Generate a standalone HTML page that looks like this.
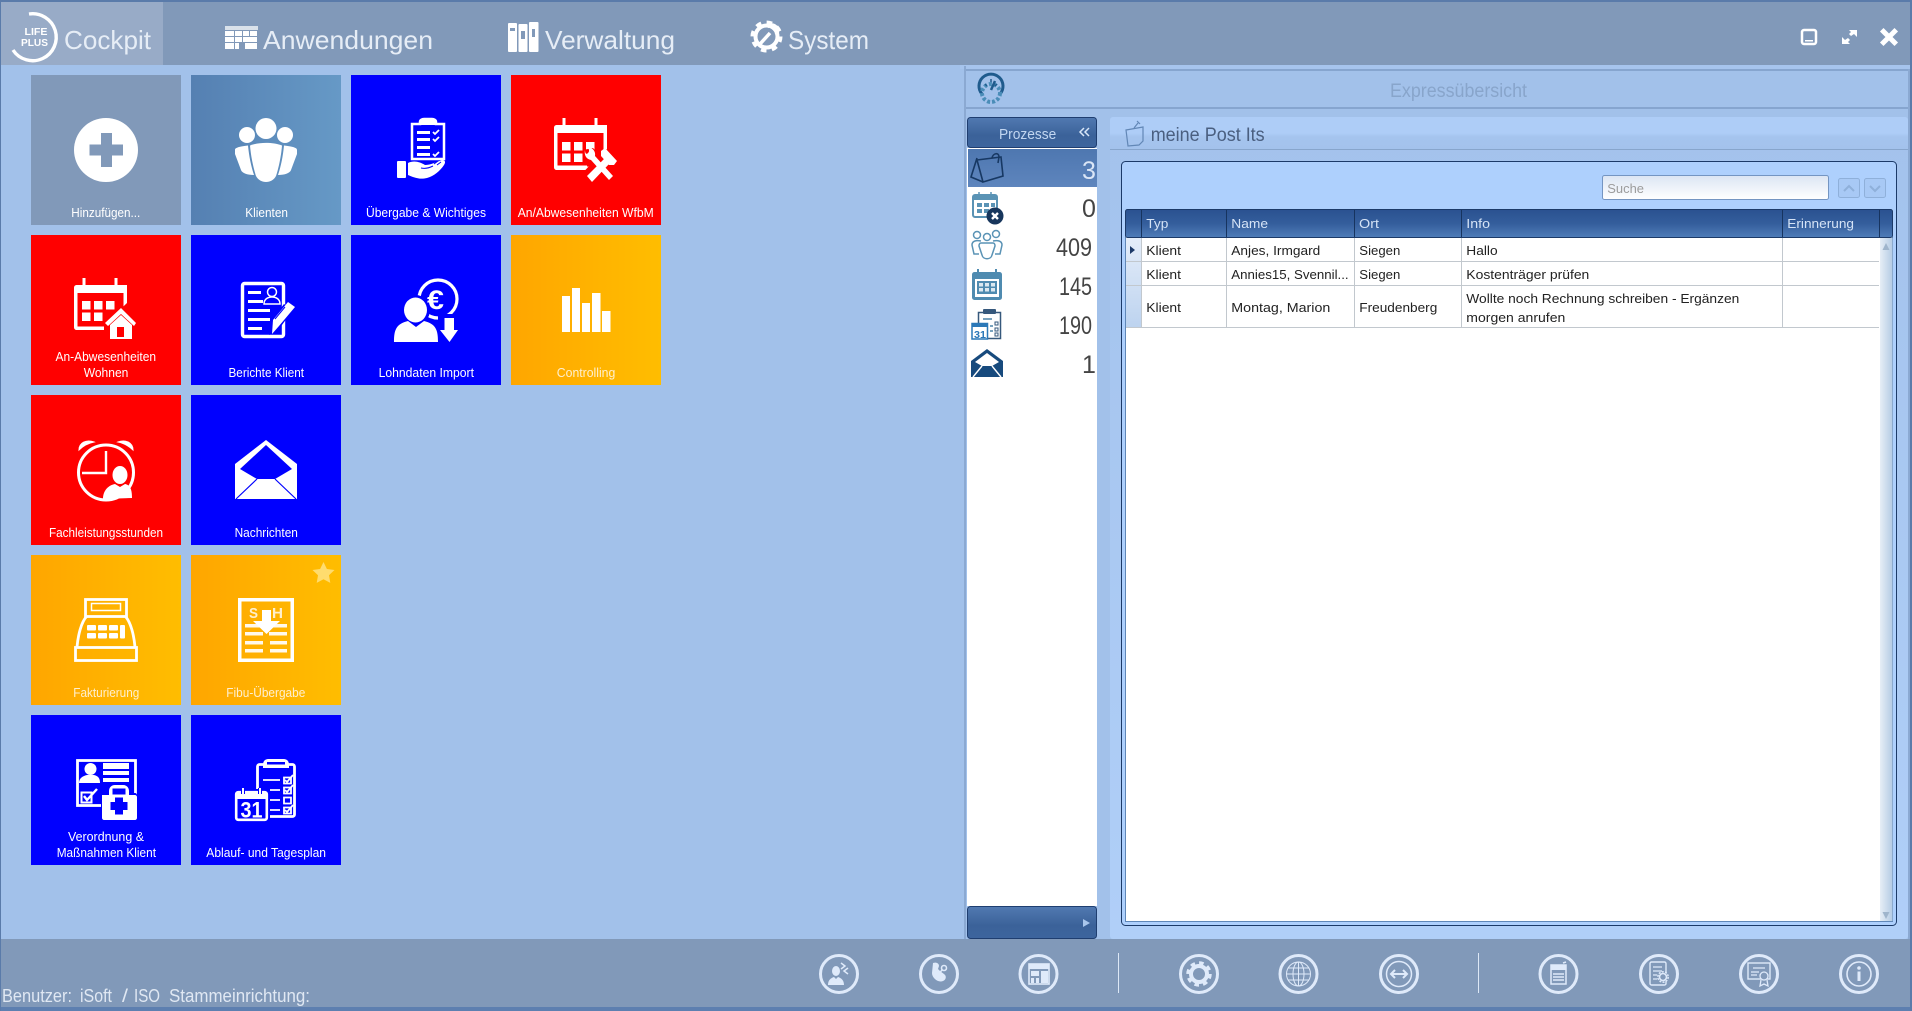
<!DOCTYPE html>
<html lang="de"><head><meta charset="utf-8"><title>Life Plus Cockpit</title>
<style>
html,body{margin:0;padding:0;width:1912px;height:1011px;overflow:hidden;background:#a2c1ea}
svg{display:block;font-family:"Liberation Sans",sans-serif}
.tl{font-size:12.5px;fill:#fff}
.tp{font-size:12.5px;fill:#ffefcf}
.g{font-size:13px;fill:#222}
.h{font-size:13px;fill:#d5e3f6}
.n{font-size:26px;fill:#e6edf6}
.c{font-size:25px;fill:#444}
.st{font-size:18px;fill:#e0e8f3}
.bi{fill:none;stroke:#dfeafa;stroke-width:1.6}
.bf{fill:#dfeafa}
</style></head><body>
<svg width="1912" height="1011" viewBox="0 0 1912 1011" xmlns="http://www.w3.org/2000/svg">
<defs>
<linearGradient id="or" x1="0" x2="1" y1="0" y2="0"><stop offset="0" stop-color="#ffa600"/><stop offset="1" stop-color="#ffbd00"/></linearGradient>
<linearGradient id="kl" x1="0" x2="1" y1="0" y2="0"><stop offset="0" stop-color="#5580b2"/><stop offset="1" stop-color="#6699c6"/></linearGradient>
<linearGradient id="ph" x1="0" x2="0" y1="0" y2="1"><stop offset="0" stop-color="#5179b1"/><stop offset=".6" stop-color="#3b6299"/><stop offset="1" stop-color="#3d659e"/></linearGradient>
<linearGradient id="sel" x1="0" x2="0" y1="0" y2="1"><stop offset="0" stop-color="#4e77b0"/><stop offset="1" stop-color="#5e85bd"/></linearGradient>
<linearGradient id="gh" x1="0" x2="0" y1="0" y2="1"><stop offset="0" stop-color="#2a5190"/><stop offset=".5" stop-color="#345e9c"/><stop offset="1" stop-color="#4f7cb8"/></linearGradient>
<linearGradient id="ps" x1="0" x2="0" y1="0" y2="1"><stop offset="0" stop-color="#a3c2ec"/><stop offset="1" stop-color="#b0cff8"/></linearGradient>
<linearGradient id="pt" x1="0" x2="0" y1="0" y2="1"><stop offset="0" stop-color="#aecdf7"/><stop offset=".5" stop-color="#aecdf7"/><stop offset=".62" stop-color="#a5c4ee"/><stop offset="1" stop-color="#a3c2ec"/></linearGradient>
<linearGradient id="sb" x1="0" x2="1" y1="0" y2="0"><stop offset="0" stop-color="#e6eef6"/><stop offset="1" stop-color="#b4cbe4"/></linearGradient>
<linearGradient id="sr" x1="0" x2="0" y1="0" y2="1"><stop offset="0" stop-color="#dbe5f3"/><stop offset="1" stop-color="#ffffff"/></linearGradient>
<linearGradient id="rs" x1="0" x2="0" y1="0" y2="1"><stop offset="0" stop-color="#e4edf9"/><stop offset="1" stop-color="#bdd3ef"/></linearGradient>
</defs>

<!-- base -->
<rect width="1912" height="1011" fill="#a2c1ea"/>
<rect width="1912" height="65" fill="#8199b9"/>
<rect width="163" height="65" fill="#98abc7"/>
<rect width="1912" height="2" fill="#5a7baa"/>
<rect y="939" width="1912" height="68" fill="#8199b9"/>
<rect y="1007" width="1912" height="4" fill="#5d7fb0"/>
<rect width="1" height="1011" fill="#5a7baa"/>
<rect x="1910" width="2" height="1011" fill="#5a7baa"/>

<!-- logo -->
<path d="M29 14A23.5 23.5 0 1 1 13 50" fill="none" stroke="#fff" stroke-width="3.400"/>
<text x="24.500" y="35" font-size="10.500" font-weight="bold" fill="#fff" textLength="23" lengthAdjust="spacingAndGlyphs">LIFE</text>
<text x="21" y="46" font-size="10.500" font-weight="bold" fill="#fff" textLength="27" lengthAdjust="spacingAndGlyphs">PLUS</text>
<text class="n" x="64" y="49" textLength="87" lengthAdjust="spacingAndGlyphs">Cockpit</text>

<!-- Anwendungen icon -->
<g fill="#fff">
<rect x="225" y="26" width="33" height="4" opacity=".7"/>
<rect x="225" y="31" width="9" height="5"/><rect x="235" y="31" width="7" height="5"/><rect x="243" y="31" width="6" height="5"/><rect x="250" y="31" width="7" height="5"/>
<rect x="225" y="37" width="9" height="5"/><rect x="235" y="37" width="7" height="5"/><rect x="243" y="37" width="14" height="5"/>
<rect x="225" y="43" width="9" height="6"/><rect x="235" y="43" width="4" height="6"/><rect x="245" y="43" width="12" height="6"/>
</g>
<text class="n" x="263" y="49" textLength="170" lengthAdjust="spacingAndGlyphs">Anwendungen</text>

<!-- Verwaltung icon -->
<g fill="#fff">
<rect x="508" y="23" width="9" height="29" rx="1"/><rect x="518.500" y="24" width="9" height="28" rx="1"/><rect x="529" y="22" width="9.500" height="30" rx="1"/>
</g>
<g fill="#8199b9"><rect x="510" y="28" width="5" height="3"/><rect x="521" y="31" width="4" height="8"/><rect x="532" y="29" width="3" height="8"/></g>
<text class="n" x="545" y="49" textLength="130" lengthAdjust="spacingAndGlyphs">Verwaltung</text>

<!-- System icon -->
<g>
<circle cx="766.500" cy="36.500" r="14" fill="none" stroke="#fff" stroke-width="4" stroke-dasharray="5.500 5.500"/>
<circle cx="766.500" cy="36.500" r="11" fill="none" stroke="#fff" stroke-width="4"/>
<path d="M760 44L770 33M767 27A6 6 0 0 1 776 35" fill="none" stroke="#fff" stroke-width="3.500"/>
</g>
<text class="n" x="788" y="49" textLength="81" lengthAdjust="spacingAndGlyphs">System</text>

<!-- window buttons -->
<rect x="1802" y="30" width="14" height="14" rx="2" fill="none" stroke="#fff" stroke-width="2.500"/>
<rect x="1805" y="40" width="8" height="1.500" fill="#fff"/>
<path d="M1849 30h8v7l-3-3-3 2-2-2 2-2zM1850 44h-8v-7l3 3 3-2 2 2-2 2z" fill="#fff"/>
<path d="M1883.500 31.500L1894.500 42.500M1894.500 31.500L1883.500 42.500" stroke="#fff" stroke-width="5" stroke-linecap="square"/>

<!-- tiles -->
<rect x="31" y="75" width="150" height="150" fill="#8199b9"/>
<rect x="191" y="75" width="150" height="150" fill="url(#kl)"/>
<rect x="351" y="75" width="150" height="150" fill="#0000ff"/>
<rect x="511" y="75" width="150" height="150" fill="#ff0000"/>
<rect x="31" y="235" width="150" height="150" fill="#ff0000"/>
<rect x="191" y="235" width="150" height="150" fill="#0000ff"/>
<rect x="351" y="235" width="150" height="150" fill="#0000ff"/>
<rect x="511" y="235" width="150" height="150" fill="url(#or)"/>
<rect x="31" y="395" width="150" height="150" fill="#ff0000"/>
<rect x="191" y="395" width="150" height="150" fill="#0000ff"/>
<rect x="31" y="555" width="150" height="150" fill="url(#or)"/>
<rect x="191" y="555" width="150" height="150" fill="url(#or)"/>
<rect x="31" y="715" width="150" height="150" fill="#0000ff"/>
<rect x="191" y="715" width="150" height="150" fill="#0000ff"/>

<!-- tile labels -->
<g>
<text class="tl" x="71.300" y="217" textLength="69" lengthAdjust="spacingAndGlyphs">Hinzufügen...</text>
<text class="tl" x="245.300" y="217" textLength="42.700" lengthAdjust="spacingAndGlyphs">Klienten</text>
<text class="tl" x="366" y="217" textLength="120" lengthAdjust="spacingAndGlyphs">Übergabe &amp; Wichtiges</text>
<text class="tl" x="517.700" y="217" textLength="136" lengthAdjust="spacingAndGlyphs">An/Abwesenheiten WfbM</text>
<text class="tl" x="55.500" y="361" textLength="100.600" lengthAdjust="spacingAndGlyphs">An-Abwesenheiten</text>
<text class="tl" x="83.700" y="377" textLength="44.700" lengthAdjust="spacingAndGlyphs">Wohnen</text>
<text class="tl" x="228.500" y="377" textLength="75.500" lengthAdjust="spacingAndGlyphs">Berichte Klient</text>
<text class="tl" x="378.600" y="377" textLength="95.400" lengthAdjust="spacingAndGlyphs">Lohndaten Import</text>
<text class="tp" x="556.800" y="377" textLength="58.500" lengthAdjust="spacingAndGlyphs">Controlling</text>
<text class="tl" x="49" y="537" textLength="114" lengthAdjust="spacingAndGlyphs">Fachleistungsstunden</text>
<text class="tl" x="234.600" y="537" textLength="63.300" lengthAdjust="spacingAndGlyphs">Nachrichten</text>
<text class="tp" x="73.300" y="697" textLength="66" lengthAdjust="spacingAndGlyphs">Fakturierung</text>
<text class="tp" x="226.300" y="697" textLength="79" lengthAdjust="spacingAndGlyphs">Fibu-Übergabe</text>
<text class="tl" x="68" y="841" textLength="76" lengthAdjust="spacingAndGlyphs">Verordnung &amp;</text>
<text class="tl" x="56.700" y="857" textLength="99.300" lengthAdjust="spacingAndGlyphs">Maßnahmen Klient</text>
<text class="tl" x="206.300" y="857" textLength="119.700" lengthAdjust="spacingAndGlyphs">Ablauf- und Tagesplan</text>
</g>

<!-- plus -->
<g transform="translate(74 118)"><circle cx="32" cy="32" r="32" fill="#fff"/><path d="M27 15h11v11.500h11v11H38V49H27V37.500H15.500v-11H27z" fill="#8199b9"/></g>
<!-- clients -->
<g transform="translate(234 118)" fill="#fff">
<circle cx="13" cy="17" r="8"/><circle cx="32" cy="10.500" r="10.500"/><circle cx="51" cy="17" r="8"/>
<path d="M16 27.500C25 24 39 24 48 27.500C47 40 44 52 42 58C40 62 36 64 32 64C28 64 24 62 22 58C20 52 17 40 16 27.500Z"/>
<path d="M1 32C1 30 3 29 14 27.500C15 38 17 48 20 57C13 57 8 55 7 52L1 36Z"/>
<path d="M63 32C63 30 61 29 50 27.500C49 38 47 48 44 57C51 57 56 55 57 52L63 36Z"/>
</g>
<!-- handover -->
<g transform="translate(394 118)">
<path d="M18 6h8V4c0-2 2-3 4-3h8c2 0 4 1 4 3v2h8v35H18z" fill="none" stroke="#fff" stroke-width="2.500"/>
<rect x="25" y="2" width="18" height="5" rx="2" fill="#fff"/>
<g fill="#fff"><rect x="23" y="13" width="13" height="3"/><rect x="23" y="20" width="13" height="3"/><rect x="23" y="28" width="13" height="3"/><rect x="23" y="35" width="13" height="3"/></g>
<path d="M39 14l2 2 4-4M39 21l2 2 4-4M39 36l2 2 4-4" fill="none" stroke="#fff" stroke-width="1.800"/>
<rect x="3" y="43" width="9" height="17" rx="1" fill="#fff"/>
<path d="M14 45C20 42 26 44 31 47C36 47 40 45 48 42C51 42 52 44 50 47C46 53 40 58 33 60C25 62 19 59 14 57Z" fill="#fff"/>
<path d="M27 50c4 1 8 0 12-2M40 46l4-3M43 47l4-3" fill="none" stroke="#0000ff" stroke-width="1"/>
</g>
<!-- calendar tools -->
<g transform="translate(554 118)">
<path d="M3 7h50v24L36 41v11H3c-2 0-3-1-3-3V10c0-2 1-3 3-3z" fill="#fff"/>
<rect x="3.500" y="15" width="46" height="33.500" fill="#ff0000"/>
<path d="M10 0v12M42 0v12" stroke="#fff" stroke-width="3" fill="none"/>
<g fill="#fff"><rect x="8" y="24" width="8.500" height="8.500"/><rect x="20" y="24" width="8.500" height="8.500"/><rect x="32" y="24" width="8.500" height="8.500"/><rect x="8" y="35.500" width="8.500" height="8.500"/><rect x="20" y="35.500" width="8.500" height="8.500"/></g>
<path d="M3.500 49H33" stroke="#fff" stroke-width="3"/>
<!-- cutout + crossed tools -->
<path d="M29 32l10-2 26 28-8 8-14-12-12 14-8-7 14-15z" fill="#ff0000"/>
<path d="M37 45L58 61" stroke="#ff0000" stroke-width="0"/>
<path d="M31 32c-1 5 1 9 6 10l18 20 4-4-18-20c1-5-3-9-8-9 2 2 3 4 1 6-2 2-3 0-3-3z" fill="#fff"/>
<path d="M33 58L51 40l5 5-18 19z" fill="#fff"/>
<path d="M47 33l4-3 12 13-3 4-5 0-8-9z" fill="#fff"/>
</g>
<!-- calendar home -->
<g transform="translate(74 278)">
<path d="M3 7h50v18L30 47v5H3c-2 0-3-1-3-3V10c0-2 1-3 3-3z" fill="#fff"/>
<rect x="3.500" y="15" width="46" height="33.500" fill="#ff0000"/>
<path d="M10 0v12M42 0v12" stroke="#fff" stroke-width="3"/>
<g fill="#fff"><rect x="8" y="23" width="8.500" height="8.500"/><rect x="20" y="23" width="8.500" height="8.500"/><rect x="32" y="23" width="8.500" height="8.500"/><rect x="8" y="34.500" width="8.500" height="8.500"/><rect x="20" y="34.500" width="8.500" height="8.500"/></g>
<path d="M47 27L65 45V64H30V45Z" fill="#ff0000"/>
<path d="M47 30L62 45l-2 3-13-12-13 12-3-3z" fill="#fff"/>
<path d="M36 47l11-10 11 10v14H36z" fill="#fff"/><rect x="43" y="49" width="7" height="10" fill="#ff0000"/>
</g>
<!-- reports -->
<g transform="translate(234 278)">
<rect x="8.500" y="5.500" width="41" height="53" rx="2" fill="none" stroke="#fff" stroke-width="3.400"/>
<g fill="#fff"><rect x="14" y="13" width="13" height="3"/><rect x="14" y="22" width="15" height="3"/><rect x="14" y="31" width="22" height="3"/><rect x="14" y="40" width="22" height="3"/><rect x="14" y="49" width="14" height="3"/></g>
<circle cx="38" cy="14" r="4.500" fill="none" stroke="#fff" stroke-width="1.500"/>
<path d="M30 26c0-5 4-7 8-7s8 2 8 7z" fill="none" stroke="#fff" stroke-width="1.500"/>
<path d="M36 44l14-18 9 6-14 19-10 6z" fill="#0000ff"/>
<path d="M38 56l1-14 15-18 7 5-16 19z" fill="#fff"/><path d="M41 41l10-12" stroke="#0000ff" stroke-width="1"/>
</g>
<!-- wage import -->
<g transform="translate(394 278)" fill="#fff">
<circle cx="44" cy="21" r="19" fill="none" stroke="#fff" stroke-width="3.200"/>
<ellipse cx="21.500" cy="32" rx="14.500" ry="15" fill="#0000ff"/>
<rect x="44" y="36" width="22" height="10" fill="#0000ff"/>
<text x="33" y="31" font-size="27" font-weight="bold" textLength="17" lengthAdjust="spacingAndGlyphs">€</text>
<ellipse cx="21.500" cy="32" rx="11.500" ry="12.500"/>
<path d="M0 64c0-12 2-18 14-21l8 6 8-6c12 3 14 9 14 21z"/>
<path d="M50.500 40h9.500v12h4L55.500 64 46 52h4.500z"/>
</g>
<!-- controlling -->
<g transform="translate(554 278)" fill="#fff"><rect x="8" y="18" width="8" height="36"/><rect x="18" y="10" width="8" height="44"/><rect x="28" y="25" width="8" height="29"/><rect x="38" y="15" width="8.500" height="39"/><rect x="48" y="33" width="8.500" height="21"/></g>
<!-- clock -->
<g transform="translate(74 438)">
<circle cx="32" cy="34.500" r="27.500" fill="none" stroke="#fff" stroke-width="3"/>
<path d="M5 12C5 5 12 1 20 4C15 5 9 8 5 12ZM59 12C59 5 52 1 44 4C49 5 55 8 59 12Z" fill="#fff" stroke="#fff" stroke-width="1"/>
<path d="M32 13v22H8" fill="none" stroke="#fff" stroke-width="2.400"/>
<circle cx="46" cy="37" r="10" fill="#ff0000"/>
<ellipse cx="46" cy="37" rx="7.500" ry="9" fill="#fff"/>
<path d="M29 61c0-9 6-14 12-15l5 3 5-3c6 1 7 7 7 14z" fill="#fff"/>
</g>
<!-- mail -->
<g transform="translate(234 438)">
<path d="M32 2L63 26V61H1V26Z" fill="#fff"/>
<path d="M32 7L58 31L41 41H23L6 31Z" fill="#0000ff"/>
<path d="M23 41L2 61M41 41L62 61" stroke="#0000ff" stroke-width="1.200"/>
</g>
<!-- register -->
<g transform="translate(74 598)" fill="none" stroke="#fff" stroke-width="2.800">
<rect x="11.500" y="1.500" width="41" height="17"/>
<rect x="17.500" y="5.500" width="29" height="7" stroke-width="1.500"/>
<path d="M13 18C7 24 4 38 3 49M51 18C57 24 60 38 61 49"/>
<rect x="1.500" y="49.500" width="61" height="13"/>
<g fill="#fff" stroke="none"><rect x="13" y="27" width="9" height="5.500" rx="1"/><rect x="24" y="27" width="9" height="5.500" rx="1"/><rect x="35" y="27" width="9" height="5.500" rx="1"/><rect x="13" y="35" width="9" height="5.500" rx="1"/><rect x="24" y="35" width="9" height="5.500" rx="1"/><rect x="35" y="35" width="9" height="5.500" rx="1"/><rect x="46" y="27" width="5" height="13.500" rx="1"/></g>
</g>
<!-- fibu -->
<g transform="translate(234 598)">
<rect x="5.750" y="1.750" width="52.500" height="60.500" fill="none" stroke="#fff" stroke-width="3.500"/>
<text x="15" y="20" font-size="15" font-weight="bold" fill="#fff" opacity=".8" textLength="9" lengthAdjust="spacingAndGlyphs">S</text>
<text x="38" y="20" font-size="15" font-weight="bold" fill="#fff" opacity=".8" textLength="11" lengthAdjust="spacingAndGlyphs">H</text>
<g fill="#fff" opacity=".92"><rect x="11" y="26" width="17" height="3.500"/><rect x="36" y="26" width="17" height="3.500"/><rect x="11" y="34" width="18" height="3.500"/><rect x="35" y="34" width="18" height="3.500"/><rect x="11" y="43" width="18" height="3.500"/><rect x="36" y="43" width="17" height="3.500"/><rect x="11" y="51" width="18" height="3.500"/><rect x="36" y="51" width="17" height="3.500"/></g>
<path d="M28 12h9v11h9L32.500 36 19 23h9z" fill="#fff"/>
</g>
<path d="M323.500 562l3.400 7 7.600 1-5.500 5.300 1.300 7.600-6.800-3.600-6.800 3.600 1.300-7.600-5.500-5.300 7.600-1z" fill="#ffdc6e"/>
<!-- Verordnung -->
<g transform="translate(74 758)">
<rect x="3.500" y="2.500" width="58" height="45" fill="none" stroke="#fff" stroke-width="2.800"/>
<g fill="#fff"><circle cx="16.500" cy="11" r="6"/><path d="M5 25c0-5 4-7 8-8h7c4 1 6 3 6 8z"/><rect x="29" y="5" width="26" height="6"/><rect x="29" y="13" width="26" height="4"/><rect x="29" y="20" width="26" height="4"/></g>
<rect x="7.500" y="34.500" width="10" height="10" fill="none" stroke="#fff" stroke-width="2"/>
<path d="M10 38l3 4 10-11" fill="none" stroke="#fff" stroke-width="2.400"/>
<path d="M27 35h8v-3c0-4 3-6 6-6h8c4 0 6 2 6 6v3h6c1 0 2 1 2 2v24c0 1-1 2-2 2H29c-1 0-2-1-2-2z" fill="#0000ff"/>
<path d="M28 37h7v-4c0-3 2-6 6-6h8c4 0 6 3 6 6v4h6c1 0 2 1 2 2v21c0 1-1 2-2 2H30c-1 0-2-1-2-2z" fill="#fff"/>
<rect x="38.500" y="30.500" width="13" height="6" fill="#0000ff"/>
<path d="M41 39.500h8v4.500h4.500v8H49v4.500h-8V52h-4.500v-8H41z" fill="#0000ff"/>
</g>
<!-- Ablauf -->
<g transform="translate(234 758)">
<rect x="23.500" y="6.500" width="37" height="52" rx="2" fill="none" stroke="#fff" stroke-width="2.800"/>
<path d="M29 10V7c0-4 2-6 6-6h14c4 0 6 2 6 6v3z" fill="#fff"/>
<rect x="33" y="4" width="18" height="2.500" fill="#0000ff"/>
<g fill="none" stroke="#fff" stroke-width="1.800"><path d="M29 22h17M36 32h10M36 42h10M36 52h10"/><path d="M50 19.500h7v6h-7zM50 29.500h7v6h-7zM50 39.500h7v6h-7zM50 49.500h7v6h-7z"/></g>
<path d="M51 22l2 2 6-7M51 32l2 2 6-7M51 52l2 2 6-7" fill="none" stroke="#fff" stroke-width="1.800"/>
<rect x="-1" y="31" width="37" height="33" rx="3" fill="#0000ff"/>
<rect x="2.200" y="34.200" width="30.600" height="27.600" rx="2" fill="#0000ff" stroke="#fff" stroke-width="2.600"/>
<rect x="2" y="34" width="31" height="7" fill="#fff"/>
<path d="M9 30v6M26 30v6" stroke="#0000ff" stroke-width="4"/><path d="M9 30v6M26 30v6" stroke="#fff" stroke-width="2"/>
<text x="6.500" y="59.500" font-size="22" font-weight="bold" fill="#fff" textLength="22" lengthAdjust="spacingAndGlyphs">31</text>
</g>

<!-- right panel header -->
<rect x="960" y="65" width="950" height="4" fill="#a6c4ed"/>
<rect x="966" y="69" width="944" height="2" fill="#86a5cf"/>
<rect x="966" y="107" width="944" height="2" fill="#86a5cf"/>
<rect x="964" y="66" width="2" height="873" fill="#8ba9d2"/>
<rect x="1908" y="69" width="2" height="870" fill="#8ba9d2"/>
<!-- gauge -->
<g fill="none">
<path d="M982 94A12 12 0 1 1 1000 94" stroke="#1f5b8d" stroke-width="3"/>
<circle cx="991" cy="93" r="9" stroke="#4a8db8" stroke-width="4" stroke-dasharray="3 2"/>
<path d="M991 90l4-9" stroke="#1f5b8d" stroke-width="2.500"/>
<path d="M985 84l2 2M991 79v3M997 84l-2 2" stroke="#1f5b8d" stroke-width="1.500"/>
</g>
<text x="1390" y="97" font-size="19" fill="#88a5cb" textLength="137" lengthAdjust="spacingAndGlyphs">Expressübersicht</text>

<!-- process panel -->
<rect x="967" y="148" width="130" height="758" fill="#fff"/>
<rect x="967.500" y="117.500" width="129" height="30" rx="3" fill="url(#ph)" stroke="#1f3e70"/>
<text x="999" y="139" font-size="15" fill="#c2d6f1" textLength="57.300" lengthAdjust="spacingAndGlyphs">Prozesse</text>
<path d="M1084 128l-4 4 4 4M1089 128l-4 4 4 4" fill="none" stroke="#d8e6f8" stroke-width="1.500"/>
<rect x="968" y="149" width="129" height="38" fill="url(#sel)"/>
<!-- process icons -->
<g fill="none" stroke="#173863" stroke-width="1.600">
<path d="M977 158L971 177L983 182"/>
<path d="M977 160L1001 157L1003 176L983 182Z"/>
<path d="M992 158C993 153 999 152 999 157L998 163"/>
</g>
<g>
<rect x="973" y="195" width="24" height="22" rx="2" fill="none" stroke="#5a93b5" stroke-width="2"/>
<rect x="973" y="195" width="24" height="5" fill="#5a93b5"/>
<path d="M979 192v5M991 192v5" stroke="#5a93b5" stroke-width="1.500"/>
<g fill="#5a93b5"><rect x="977" y="203" width="5" height="4"/><rect x="984" y="203" width="5" height="4"/><rect x="991" y="203" width="4" height="4"/><rect x="977" y="209" width="5" height="4"/><rect x="984" y="209" width="5" height="4"/></g>
<circle cx="995" cy="216" r="8.500" fill="#17365c"/>
<path d="M992 213l6 6M998 213l-6 6" stroke="#fff" stroke-width="2.400"/>
</g>
<g fill="none" stroke="#5a93b5" stroke-width="1.500">
<circle cx="977" cy="235" r="3.500"/><circle cx="987" cy="237" r="3.500"/><circle cx="996" cy="234" r="3.500"/>
<path d="M981 241C976 240 972 241 972 245L974 254H979M993 241C998 240 1002 241 1002 245L1000 254H995"/>
<path d="M981 243H993C994 243 995 244 995 246L992 255C991 260 983 260 982 255L979 246C979 244 980 243 981 243Z"/>
</g>
<g>
<rect x="972" y="272" width="30" height="28" rx="2.500" fill="#4f8bb0"/>
<rect x="975" y="279" width="24" height="18" fill="#fff"/>
<path d="M978 269v6M996 269v6" stroke="#4f8bb0" stroke-width="2"/>
<rect x="977" y="281" width="20" height="13" fill="#4f8bb0"/>
<g fill="#dbe8f0"><rect x="979" y="283" width="4" height="3.500"/><rect x="985" y="283" width="4" height="3.500"/><rect x="991" y="283" width="4" height="3.500"/><rect x="979" y="288" width="4" height="3.500"/><rect x="985" y="288" width="4" height="3.500"/><rect x="991" y="288" width="4" height="3.500"/></g>
</g>
<g>
<rect x="978.500" y="312.500" width="22" height="26" fill="#fff" stroke="#36587c" stroke-width="1.500"/>
<rect x="983" y="309" width="13" height="5" rx="1" fill="#36587c"/>
<path d="M983 319h9M990 326h3M990 331h3" stroke="#4b84a9" stroke-width="1.500"/>
<path d="M995 322h3v3h-3zM995 328h3v3h-3zM995 333h3v3h-3z" fill="none" stroke="#36587c"/>
<rect x="972" y="323.500" width="15.500" height="15.500" fill="#fff" stroke="#2b78b8" stroke-width="1.500"/>
<rect x="972" y="323" width="15.500" height="4" fill="#2b78b8"/>
<text x="974" y="338" font-size="10.500" font-weight="bold" fill="#2b78b8" textLength="12" lengthAdjust="spacingAndGlyphs">31</text>
</g>
<g>
<path d="M987 349L1003 361V377H971V361Z" fill="#174a7d"/>
<path d="M987 353L999 362L992 366H982L975 362Z" fill="#fff"/>
<path d="M982 366L973 377M992 366L1001 377" stroke="#fff" stroke-width="1.400"/>
</g>
<g>
<text x="1082" y="179" class="c" style="fill:#dbe6f6">3</text>
<text x="1082" y="217" class="c">0</text>
<text x="1056" y="256" class="c" textLength="36" lengthAdjust="spacingAndGlyphs">409</text>
<text x="1059" y="295" class="c" textLength="33" lengthAdjust="spacingAndGlyphs">145</text>
<text x="1059" y="334" class="c" textLength="33" lengthAdjust="spacingAndGlyphs">190</text>
<text x="1082" y="373" class="c">1</text>
</g>
<rect x="967.500" y="906.500" width="129" height="32" rx="3" fill="url(#ph)" stroke="#1f3e70"/>
<path d="M1083 919l7 4-7 4z" fill="#a9c6ec"/>

<!-- post-it panel -->
<rect x="1110" y="117" width="798" height="822" rx="3" fill="url(#ps)"/>
<rect x="1110" y="117" width="798" height="32" rx="3" fill="url(#pt)"/>
<rect x="1110" y="149" width="798" height="1" fill="#87a5cc"/>
<g fill="none" stroke="#6287b6" stroke-width="1.200"><path d="M1126 130L1143 127L1143 141L1139 145L1128 146Z"/><path d="M1134 128L1138 123M1137 121l3 3"/></g>
<text x="1150.700" y="141" font-size="19" fill="#4a5f80" textLength="114" lengthAdjust="spacingAndGlyphs">meine Post Its</text>

<rect x="1121.500" y="161.500" width="775" height="764" rx="4" fill="#aed0fd" stroke="#1c3a68"/>
<rect x="1126" y="237" width="767" height="685" fill="#fff"/>
<path d="M1125.500 237V921.500H1892.500V237" fill="none" stroke="#5f87b8"/>

<!-- search -->
<rect x="1602.500" y="175.500" width="226" height="24" rx="2" fill="url(#sr)" stroke="#7495c2"/>
<text x="1607.300" y="193" font-size="13" fill="#9c9c9c" textLength="36.700" lengthAdjust="spacingAndGlyphs">Suche</text>
<rect x="1838.500" y="178.500" width="21" height="19" rx="2" fill="#a8c9f5" stroke="#8fb0da"/>
<rect x="1864.500" y="178.500" width="21" height="19" rx="2" fill="#a8c9f5" stroke="#8fb0da"/>
<path d="M1844 191l5-5 5 5" fill="none" stroke="#8fb0da" stroke-width="2"/>
<path d="M1870 186l5 5 5-5" fill="none" stroke="#8fb0da" stroke-width="2"/>

<!-- grid header -->
<rect x="1125.500" y="209.500" width="767" height="28" rx="2" fill="url(#gh)" stroke="#1c3a68"/>
<g stroke="#17345f"><path d="M1141.500 210V237M1226.500 210V237M1354.500 210V237M1461.500 210V237M1782.500 210V237M1879.500 210V237"/></g>
<g>
<text class="h" x="1146.300" y="228" textLength="22" lengthAdjust="spacingAndGlyphs">Typ</text>
<text class="h" x="1231.300" y="228" textLength="36.700" lengthAdjust="spacingAndGlyphs">Name</text>
<text class="h" x="1359" y="228" textLength="20" lengthAdjust="spacingAndGlyphs">Ort</text>
<text class="h" x="1466.300" y="228" textLength="23.700" lengthAdjust="spacingAndGlyphs">Info</text>
<text class="h" x="1787.300" y="228" textLength="66.700" lengthAdjust="spacingAndGlyphs">Erinnerung</text>
</g>

<!-- row selectors -->
<rect x="1126" y="238" width="15" height="89" fill="url(#rs)"/>
<path d="M1130 246l5 4-5 4z" fill="#1c3a68"/>
<!-- grid lines -->
<g stroke="#c2c8ce"><path d="M1126 261.500H1879M1126 285.500H1879M1126 327.500H1879"/>
<path d="M1141.500 238V327M1226.500 238V327M1354.500 238V327M1461.500 238V327M1782.500 238V327"/></g>

<!-- grid text -->
<text class="g" x="1146.300" y="255" textLength="34.700" lengthAdjust="spacingAndGlyphs">Klient</text>
<text class="g" x="1146.300" y="279" textLength="34.700" lengthAdjust="spacingAndGlyphs">Klient</text>
<text class="g" x="1146.300" y="312" textLength="34.700" lengthAdjust="spacingAndGlyphs">Klient</text>
<text class="g" x="1231.300" y="255" textLength="89" lengthAdjust="spacingAndGlyphs">Anjes, Irmgard</text>
<text class="g" x="1231.300" y="279" textLength="117.300" lengthAdjust="spacingAndGlyphs">Annies15, Svennil...</text>
<text class="g" x="1231.300" y="312" textLength="99" lengthAdjust="spacingAndGlyphs">Montag, Marion</text>
<text class="g" x="1359.300" y="255" textLength="41" lengthAdjust="spacingAndGlyphs">Siegen</text>
<text class="g" x="1359.300" y="279" textLength="41" lengthAdjust="spacingAndGlyphs">Siegen</text>
<text class="g" x="1359.300" y="312" textLength="78" lengthAdjust="spacingAndGlyphs">Freudenberg</text>
<text class="g" x="1466.300" y="255" textLength="31.300" lengthAdjust="spacingAndGlyphs">Hallo</text>
<text class="g" x="1466.300" y="279" textLength="123" lengthAdjust="spacingAndGlyphs">Kostenträger prüfen</text>
<text class="g" x="1466.300" y="303" textLength="273" lengthAdjust="spacingAndGlyphs">Wollte noch Rechnung schreiben - Ergänzen</text>
<text class="g" x="1466.300" y="322" textLength="99" lengthAdjust="spacingAndGlyphs">morgen anrufen</text>

<!-- scrollbar -->
<rect x="1880" y="238" width="12.500" height="683" fill="url(#sb)"/>
<path d="M1886 243l3.500 7h-7z" fill="#9fb5cc"/>
<path d="M1886 919l-3.500-7h7z" fill="#9fb5cc"/>

<!-- bottom icons -->
<g fill="none" stroke="#dfeafa" stroke-width="3">
<circle cx="839" cy="974" r="18.500"/><circle cx="939" cy="974" r="18.500"/><circle cx="1038.500" cy="974" r="18.500"/>
<circle cx="1199" cy="974" r="18.500"/><circle cx="1298.500" cy="974" r="18.500"/><circle cx="1399" cy="974" r="18.500"/>
<circle cx="1558.500" cy="974" r="18.500"/><circle cx="1659" cy="974" r="18.500"/><circle cx="1759" cy="974" r="18.500"/><circle cx="1859" cy="974" r="18.500"/>
</g>
<path d="M1118.500 953V993M1478.500 953V993" stroke="#dde8f6"/>
<!-- person + arrows -->
<g class="bf"><ellipse cx="836" cy="971" rx="4" ry="5"/><path d="M828 985c0-5 3-7 6-8l2 2 2-2c3 1 6 3 6 8z"/></g>
<path d="M841 963l4 3-4 3M848 968l-4 3 4 3" fill="none" stroke="#dfeafa" stroke-width="1.500"/>
<!-- phone/key -->
<path d="M933 963c3-1 6 0 6 3l-1 3 2 2 4 3c3 2 2 6-1 7-5 2-11-3-11-8z" class="bf"/>
<circle cx="944" cy="968" r="2.500" class="bi"/>
<path d="M942 970l-5 6" class="bi"/>
<!-- window -->
<g><rect x="1029" y="964" width="20" height="20" class="bi"/><rect x="1029" y="964" width="20" height="5" class="bf"/><rect x="1031" y="971" width="8" height="5" class="bf"/><rect x="1041" y="971" width="7" height="12" class="bf"/><rect x="1031" y="978" width="3" height="5" class="bf"/><rect x="1036" y="978" width="3" height="5" class="bf"/></g>
<!-- gear -->
<circle cx="1199" cy="974" r="8" fill="none" stroke="#dfeafa" stroke-width="4"/>
<circle cx="1199" cy="974" r="11" fill="none" stroke="#dfeafa" stroke-width="3.500" stroke-dasharray="4.500 4.100"/>
<!-- globe -->
<g class="bi" style="stroke-width:1"><circle cx="1298.500" cy="974" r="12"/><ellipse cx="1298.500" cy="974" rx="5.500" ry="12"/><path d="M1298.500 962V986M1286.500 974H1310.500M1288 968H1309M1288 980H1309"/></g>
<!-- arrows circle -->
<circle cx="1399" cy="974" r="12.500" class="bi" style="stroke-width:1.500"/>
<path d="M1391 974h16M1395 970l-4 4 4 4M1403 970l4 4-4 4" class="bi" style="stroke-width:2"/>
<!-- news -->
<g><path d="M1551 965H1566V984H1551Z" class="bi" style="stroke-width:1.500"/><rect x="1551" y="965" width="15" height="5" class="bf"/><path d="M1553 974h11M1553 977h11M1553 980h11" class="bi" style="stroke-width:1.500"/><path d="M1563 963l3-1" class="bi"/></g>
<!-- doc gear -->
<g><rect x="1650" y="962" width="16" height="23" rx="1.500" class="bi" style="stroke-width:1.400"/><path d="M1653 967h9M1653 971h9M1653 975h4M1653 979h4" class="bi" style="stroke-width:1.200"/><circle cx="1663" cy="977" r="5" fill="#8199b9"/><circle cx="1663" cy="977" r="3.500" class="bi"/><circle cx="1663" cy="977" r="5.200" fill="none" stroke="#dfeafa" stroke-width="1.500" stroke-dasharray="2 1.300"/></g>
<!-- certificate -->
<g><rect x="1748" y="963" width="22" height="16" class="bi" style="stroke-width:1.400"/><path d="M1753 968h12M1751 972h8M1751 975h6" class="bi" style="stroke-width:1.200"/><circle cx="1764" cy="976" r="4" fill="#8199b9" stroke="#dfeafa" stroke-width="1.300"/><path d="M1761 980l-1 6 4-2 4 2-1-6" class="bi" style="stroke-width:1.300"/></g>
<!-- info -->
<circle cx="1859" cy="974" r="12" class="bi" style="stroke-width:1.600"/>
<circle cx="1859" cy="968" r="1.800" class="bf"/><rect x="1857.500" y="971.500" width="3" height="9.500" class="bf"/>

<!-- status -->
<text class="st" x="2" y="1002" textLength="70" lengthAdjust="spacingAndGlyphs">Benutzer:</text>
<text class="st" x="80" y="1002" textLength="32" lengthAdjust="spacingAndGlyphs">iSoft</text>
<text class="st" x="122" y="1002" textLength="6" lengthAdjust="spacingAndGlyphs">/</text>
<text class="st" x="134" y="1002" textLength="26" lengthAdjust="spacingAndGlyphs">ISO</text>
<text class="st" x="169" y="1002" textLength="141" lengthAdjust="spacingAndGlyphs">Stammeinrichtung:</text>
</svg>
</body></html>
